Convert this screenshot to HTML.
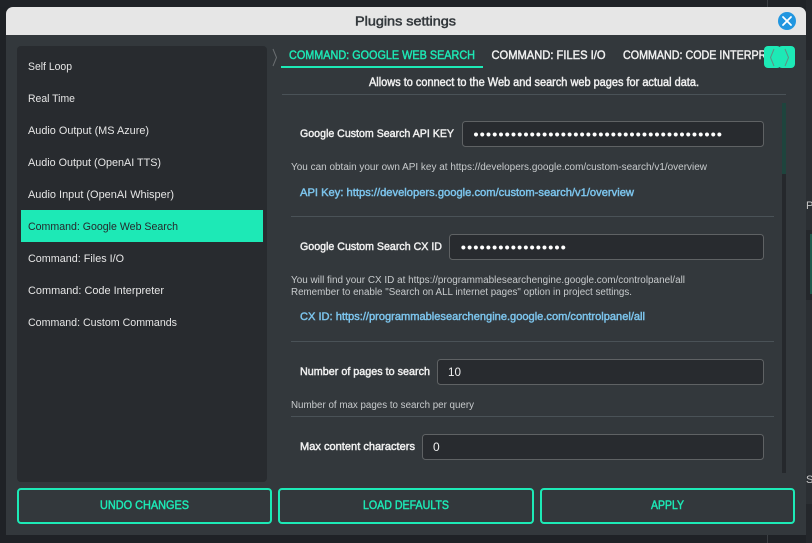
<!DOCTYPE html>
<html><head><meta charset="utf-8"><title>Plugins settings</title>
<style>
html,body{margin:0;padding:0;width:812px;height:543px;overflow:hidden;background:#1f2226}
svg{display:block}
text{font-family:"Liberation Sans",sans-serif;white-space:pre}
.l{font-size:11px;fill:#e6e6e6}
.b{font-size:11px;fill:#f0f0f0;stroke:#f0f0f0;stroke-width:.45px}
.h{font-size:10px;fill:#c8cbcd}
.a{font-size:11px;fill:#7cc4ec;stroke:#7cc4ec;stroke-width:.45px}
.t{font-size:12px;fill:#f0f0f0;stroke:#f0f0f0;stroke-width:.45px}
.k{font-size:12px;fill:#1de9b6;stroke:#1de9b6;stroke-width:.45px}
.d{font-size:15px;fill:#fff;letter-spacing:.99px}
.i{fill:#282b2f;stroke:#5f6264;stroke-width:1}
</style></head><body>
<svg width="812" height="543" viewBox="0 0 812 543" xmlns="http://www.w3.org/2000/svg">
<rect width="812" height="543" fill="#1f2226"/>
<rect x="0" y="0" width="812" height="7" fill="#202327"/>
<rect x="767" y="0" width="1" height="7" fill="#3a3e42"/>
<rect x="806" y="60" width="6" height="483" fill="#2b2f33"/>
<rect x="806" y="0" width="6" height="60" fill="#24272b"/>
<rect x="806" y="230" width="6" height="70" fill="#24272b"/>
<rect x="810" y="234" width="2" height="60" fill="#1f5a4c"/>
<rect x="806" y="504" width="6" height="39" fill="#24272b"/>
<rect x="767" y="535" width="1" height="8" fill="#3a3e42"/>
<text x="806" y="209" style="font-size:11px;fill:#c8c8c8">P</text>
<text x="806" y="483" style="font-size:11px;fill:#c8c8c8">S</text>

<path d="M6 14a7 7 0 0 1 7-7H799a7 7 0 0 1 7 7V535H6Z" fill="#33383c"/>
<path d="M6 14a7 7 0 0 1 7-7H799a7 7 0 0 1 7 7V35H6Z" fill="#e6e6e6"/>
<text x="405.500" y="25.500" text-anchor="middle" textLength="101" lengthAdjust="spacingAndGlyphs" style="font-size:13px;fill:#33383c;stroke:#33383c;stroke-width:.5px">Plugins settings</text>
<circle cx="787" cy="21" r="9" fill="#2196e0"/>
<path d="M783 17L791 25M791 17L783 25" stroke="#fff" stroke-width="1.800" stroke-linecap="round"/>

<rect x="17" y="46" width="250" height="436" rx="4" fill="#282b2f"/>
<rect x="21" y="210" width="242" height="32" fill="#1de9b6"/>
<text class="l" x="28" y="70" textLength="44" lengthAdjust="spacingAndGlyphs">Self Loop</text>
<text class="l" x="28" y="102" textLength="47" lengthAdjust="spacingAndGlyphs">Real Time</text>
<text class="l" x="28" y="134" textLength="121" lengthAdjust="spacingAndGlyphs">Audio Output (MS Azure)</text>
<text class="l" x="28" y="166" textLength="133" lengthAdjust="spacingAndGlyphs">Audio Output (OpenAI TTS)</text>
<text class="l" x="28" y="198" textLength="146" lengthAdjust="spacingAndGlyphs">Audio Input (OpenAI Whisper)</text>
<text class="l" x="28" y="230" textLength="150" lengthAdjust="spacingAndGlyphs" style="fill:#26292d">Command: Google Web Search</text>
<text class="l" x="28" y="262" textLength="96" lengthAdjust="spacingAndGlyphs">Command: Files I/O</text>
<text class="l" x="28" y="294" textLength="136" lengthAdjust="spacingAndGlyphs">Command: Code Interpreter</text>
<text class="l" x="28" y="326" textLength="149" lengthAdjust="spacingAndGlyphs">Command: Custom Commands</text>

<path d="M273 49L276.500 57.500L273 66" fill="none" stroke="#6a6e71" stroke-width="1"/>
<text class="k" x="289" y="59" textLength="186" lengthAdjust="spacingAndGlyphs">COMMAND: GOOGLE WEB SEARCH</text>
<rect x="281" y="66" width="202" height="2" fill="#1de9b6"/>
<text class="t" x="491.500" y="59" textLength="114" lengthAdjust="spacingAndGlyphs">COMMAND: FILES I/O</text>
<svg x="600" y="46" width="165" height="24"><text class="t" x="23" y="13" textLength="172" lengthAdjust="spacingAndGlyphs">COMMAND: CODE INTERPRETER</text></svg>
<rect x="764" y="46" width="17" height="22" rx="4" fill="#1de9b6"/>
<rect x="778" y="46" width="17" height="22" rx="4" fill="#1de9b6"/>
<path d="M774 49L770.500 57.500L774 66M785 49L788.500 57.500L785 66" fill="none" stroke="#5f8f84" stroke-width="1"/>

<text x="534" y="86" text-anchor="middle" textLength="330" lengthAdjust="spacingAndGlyphs" style="font-size:11.500px;fill:#f0f0f0;stroke:#f0f0f0;stroke-width:.45px">Allows to connect to the Web and search web pages for actual data.</text>
<rect x="282" y="94" width="504" height="1" fill="#4a5257"/>

<rect x="782" y="103" width="4" height="71" fill="#1e443d"/>
<rect x="782" y="174" width="4" height="299" fill="#25282c"/>

<text class="b" x="300" y="137" textLength="154" lengthAdjust="spacingAndGlyphs">Google Custom Search API KEY</text>
<rect class="i" x="462.500" y="121.500" width="301" height="25" rx="3"/>
<text class="d" x="473.400" y="139.400">••••••••••••••••••••••••••••••••••••••••</text>
<text class="h" x="291" y="170" textLength="416" lengthAdjust="spacingAndGlyphs">You can obtain your own API key at https://developers.google.com/custom-search/v1/overview</text>
<text class="a" x="300" y="196" textLength="334" lengthAdjust="spacingAndGlyphs">API Key: https://developers.google.com/custom-search/v1/overview</text>
<rect x="291" y="216" width="483" height="1" fill="#4a5257"/>

<text class="b" x="300" y="250" textLength="142" lengthAdjust="spacingAndGlyphs">Google Custom Search CX ID</text>
<rect class="i" x="449.500" y="234.500" width="314" height="25" rx="3"/>
<text class="d" x="460.800" y="252.400">•••••••••••••••••</text>
<text class="h" x="291" y="283" textLength="394" lengthAdjust="spacingAndGlyphs">You will find your CX ID at https://programmablesearchengine.google.com/controlpanel/all</text>
<text class="h" x="291" y="295" textLength="341" lengthAdjust="spacingAndGlyphs">Remember to enable "Search on ALL internet pages" option in project settings.</text>
<text class="a" x="300" y="320" textLength="345" lengthAdjust="spacingAndGlyphs">CX ID: https://programmablesearchengine.google.com/controlpanel/all</text>
<rect x="291" y="341" width="483" height="1" fill="#4a5257"/>

<text class="b" x="300" y="375" textLength="130" lengthAdjust="spacingAndGlyphs">Number of pages to search</text>
<rect class="i" x="437.500" y="359.500" width="326" height="25" rx="3"/>
<text x="448" y="376" textLength="13" lengthAdjust="spacingAndGlyphs" style="font-size:12px;fill:#f0f0f0">10</text>
<text class="h" x="291" y="408" textLength="183" lengthAdjust="spacingAndGlyphs">Number of max pages to search per query</text>
<rect x="291" y="416" width="483" height="1" fill="#4a5257"/>

<text class="b" x="300" y="450" textLength="115" lengthAdjust="spacingAndGlyphs">Max content characters</text>
<rect class="i" x="422.500" y="434.500" width="341" height="25" rx="3"/>
<text x="433" y="451" style="font-size:12px;fill:#f0f0f0">0</text>

<rect x="18" y="489" width="253" height="34" rx="3" fill="none" stroke="#1de9b6" stroke-width="2"/>
<rect x="279" y="489" width="254" height="34" rx="3" fill="none" stroke="#1de9b6" stroke-width="2"/>
<rect x="541" y="489" width="253" height="34" rx="3" fill="none" stroke="#1de9b6" stroke-width="2"/>
<text class="k" x="100" y="509" textLength="89" lengthAdjust="spacingAndGlyphs" style="font-size:11.500px">UNDO CHANGES</text>
<text class="k" x="363" y="509" textLength="86" lengthAdjust="spacingAndGlyphs" style="font-size:11.500px">LOAD DEFAULTS</text>
<text class="k" x="651" y="509" textLength="33" lengthAdjust="spacingAndGlyphs" style="font-size:11.500px">APPLY</text>
</svg>
</body></html>
